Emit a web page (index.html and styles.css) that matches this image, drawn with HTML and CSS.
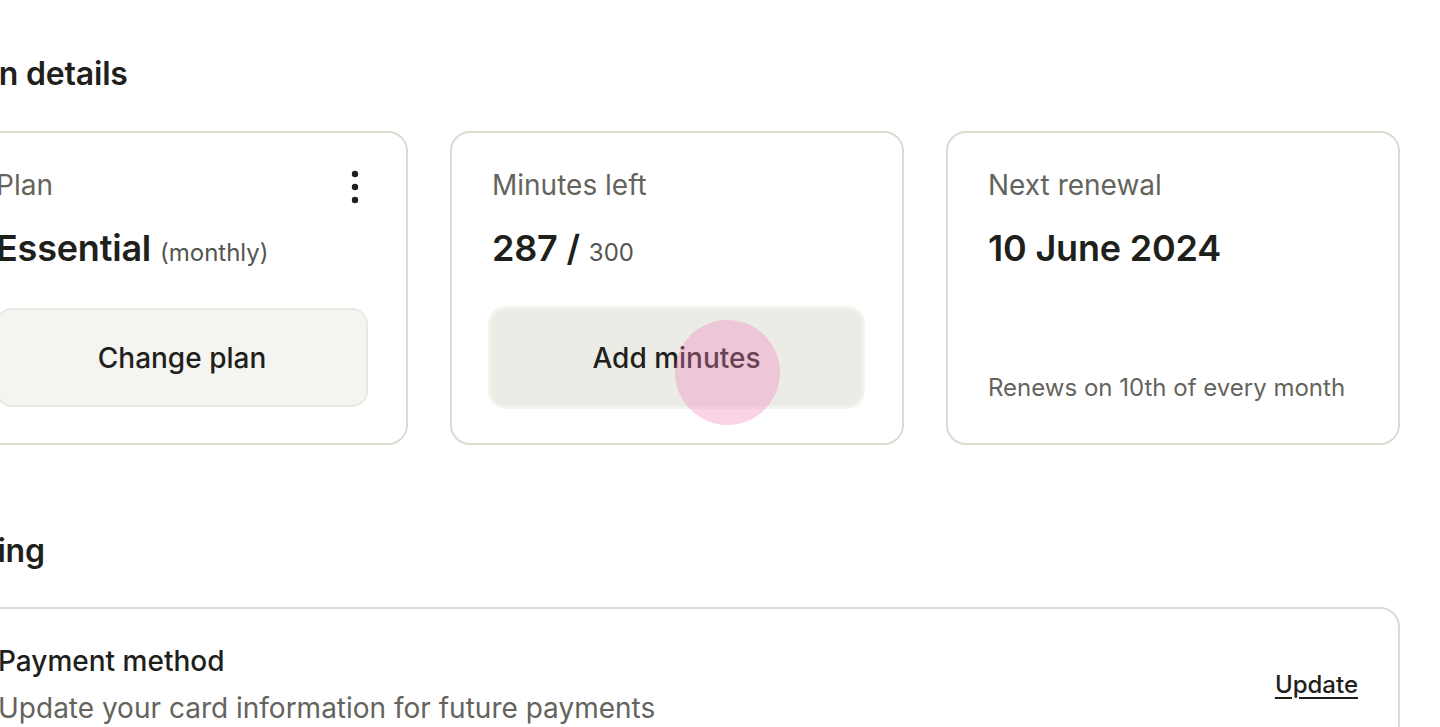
FILE: index.html
```html
<!DOCTYPE html>
<html lang="en">
<head>
<meta charset="utf-8">
<title>Plan details</title>
<link rel="stylesheet" href="styles.css">
</head>
<body>
<main class="page">
  <section class="section">
    <h2 class="section-title">Plan details</h2>
    <div class="cards">
      <div class="card">
        <div class="card-head">
          <span class="label">Plan</span>
          <svg class="kebab" width="8" height="34" viewBox="0 0 8 34" aria-hidden="true">
            <circle cx="4" cy="4" r="3.2" fill="#1f1f1c"/>
            <circle cx="4" cy="17" r="3.2" fill="#1f1f1c"/>
            <circle cx="4" cy="30" r="3.2" fill="#1f1f1c"/>
          </svg>
        </div>
        <div class="value">Essential <span class="value-sub">(monthly)</span></div>
        <button class="btn btn-light">Change plan</button>
      </div>
      <div class="card">
        <div class="card-head">
          <span class="label">Minutes left</span>
        </div>
        <div class="value">287 / <span class="value-sub">300</span></div>
        <div class="btn-wrap">
          <button class="btn btn-active">Add minutes</button>
          <span class="click-dot"></span>
        </div>
      </div>
      <div class="card">
        <div class="card-head">
          <span class="label">Next renewal</span>
        </div>
        <div class="value">10 June 2024</div>
        <div class="note">Renews on 10th of every month</div>
      </div>
    </div>
  </section>
  <section class="section billing">
    <h2 class="section-title">Billing</h2>
    <div class="panel">
      <div class="panel-text">
        <div class="panel-title">Payment method</div>
        <div class="panel-desc">Update your card information for future payments</div>
      </div>
      <a class="link" href="#">Update</a>
    </div>
  </section>
</main>
</body>
</html>
```

FILE: styles.css
```css
* { box-sizing: border-box; }
html, body { margin: 0; padding: 0; background: #ffffff; overflow: hidden; }
body {
  font-family: Inter, "Noto Sans", "Liberation Sans", sans-serif;
  color: #1f1f1c;
  width: 1440px;
  height: 727px;
}
.page {
  margin-left: -46px;
  width: 1446px;
  padding-top: 54px;
}
.section-title {
  margin: 0 0 0 -2px;
  font-size: 32px;
  line-height: 40px;
  font-weight: 600;
  letter-spacing: -0.2px;
  color: #1f1f1c;
}
.cards {
  margin-top: 37px;
  display: grid;
  grid-template-columns: repeat(3, 1fr);
  gap: 42px;
}
.card {
  position: relative;
  height: 314px;
  border: 2px solid #dcdcd3;
  border-radius: 20px;
  padding: 35px 38px 36px 40px;
  display: flex;
  flex-direction: column;
}
.card-head {
  display: flex;
  justify-content: space-between;
  align-items: center;
  height: 34px;
}
.label {
  font-size: 28px;
  line-height: 34px;
  color: #64645d;
}
.kebab { margin-right: 9px; margin-top: 4px; }
.value {
  margin-top: 24px;
  font-size: 36px;
  line-height: 44px;
  font-weight: 600;
  color: #1f1f1c;
  letter-spacing: -0.2px;
}
.value-sub {
  font-size: 24px;
  font-weight: 400;
  color: #55554f;
  letter-spacing: 0;
}
.btn {
  margin-top: auto;
  width: 100%;
  height: 99px;
  border-radius: 16px;
  font-family: inherit;
  font-size: 28px;
  font-weight: 500;
  color: #1f1f1c;
  cursor: pointer;
}
.btn-light {
  background: #f4f4f0;
  border: 2px solid #e9e9e3;
}
.btn-wrap {
  position: relative;
  margin-top: auto;
  margin-bottom: -2px;
}
.btn-active {
  display: block;
  background: #ecece7;
  border: 3px solid #f4f4ef;
  border-radius: 18px;
  height: 103px;
  margin-left: -4px;
  width: calc(100% + 5px);
}
.click-dot {
  position: absolute;
  left: 183px;
  top: 14px;
  width: 105px;
  height: 105px;
  border-radius: 50%;
  background: rgba(240, 130, 185, 0.35);
  pointer-events: none;
}
.note {
  margin-top: auto;
  font-size: 24px;
  line-height: 30px;
  color: #64645d;
  padding-bottom: 4px;
}
.billing { margin-top: 86px; }
.panel {
  margin-top: 36px;
  border: 2px solid #dcdcd3;
  border-radius: 20px;
  padding: 34px 40px 40px 42px;
  display: flex;
  align-items: center;
  justify-content: space-between;
}
.panel-title {
  font-size: 28px;
  line-height: 36px;
  font-weight: 500;
  color: #1f1f1c;
}
.panel-desc {
  margin-top: 11px;
  font-size: 28px;
  line-height: 36px;
  color: #64645d;
}
.link {
  font-size: 24px;
  line-height: 30px;
  font-weight: 500;
  color: #1f1f1c;
  text-decoration: underline;
  text-underline-offset: 4px;
  text-decoration-thickness: 2px;
}
```
